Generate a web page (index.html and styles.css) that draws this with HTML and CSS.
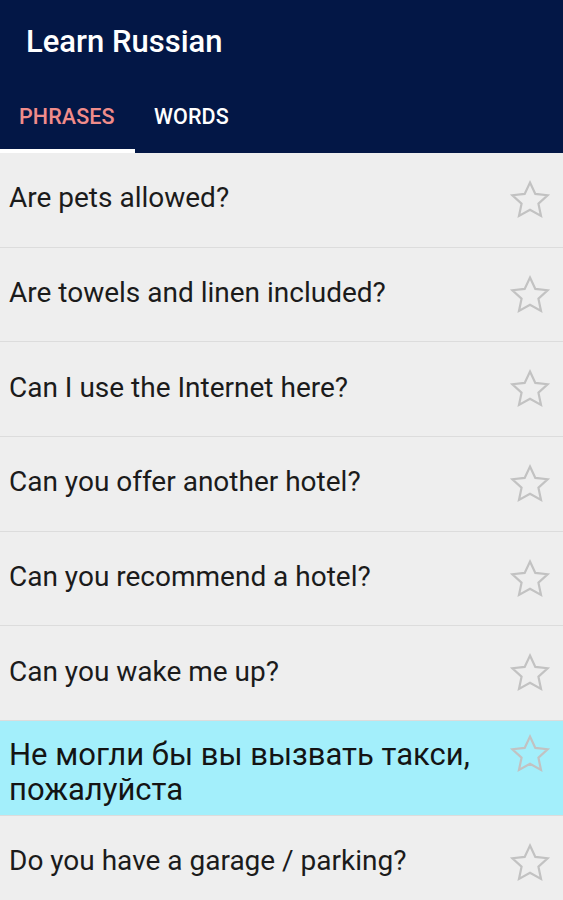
FILE: index.html
```html
<!DOCTYPE html>
<html lang="en">
<head>
    <meta charset="UTF-8">
    <meta name="viewport" content="width=device-width, initial-scale=1.0">
    <title>Learn Russian</title>
    <link rel="stylesheet" href="styles.css">
</head>
<body>
    <header class="app-bar">
        <h1 class="app-title">Learn Russian</h1>
        <nav class="tabs">
            <div class="tab active">PHRASES</div>
            <div class="tab">WORDS</div>
        </nav>
    </header>

    <ul class="phrase-list">
        <li class="phrase-row"><span class="phrase-text">Are pets allowed?</span><svg class="star" viewBox="0 0 24 24"><path d="M12 2.5l2.9 6.2 6.7.7-5 4.6 1.4 6.7L12 17.3l-6 3.4 1.4-6.7-5-4.6 6.7-.7z"/></svg></li>
        <li class="phrase-row"><span class="phrase-text">Are towels and linen included?</span><svg class="star" viewBox="0 0 24 24"><path d="M12 2.5l2.9 6.2 6.7.7-5 4.6 1.4 6.7L12 17.3l-6 3.4 1.4-6.7-5-4.6 6.7-.7z"/></svg></li>
        <li class="phrase-row"><span class="phrase-text">Can I use the Internet here?</span><svg class="star" viewBox="0 0 24 24"><path d="M12 2.5l2.9 6.2 6.7.7-5 4.6 1.4 6.7L12 17.3l-6 3.4 1.4-6.7-5-4.6 6.7-.7z"/></svg></li>
        <li class="phrase-row"><span class="phrase-text">Can you offer another hotel?</span><svg class="star" viewBox="0 0 24 24"><path d="M12 2.5l2.9 6.2 6.7.7-5 4.6 1.4 6.7L12 17.3l-6 3.4 1.4-6.7-5-4.6 6.7-.7z"/></svg></li>
        <li class="phrase-row"><span class="phrase-text">Can you recommend a hotel?</span><svg class="star" viewBox="0 0 24 24"><path d="M12 2.5l2.9 6.2 6.7.7-5 4.6 1.4 6.7L12 17.3l-6 3.4 1.4-6.7-5-4.6 6.7-.7z"/></svg></li>
        <li class="phrase-row"><span class="phrase-text">Can you wake me up?</span><svg class="star" viewBox="0 0 24 24"><path d="M12 2.5l2.9 6.2 6.7.7-5 4.6 1.4 6.7L12 17.3l-6 3.4 1.4-6.7-5-4.6 6.7-.7z"/></svg></li>
        <li class="phrase-row selected"><span class="phrase-text">Не могли бы вы вызвать такси, пожалуйста</span><svg class="star" viewBox="0 0 24 24"><path d="M12 2.5l2.9 6.2 6.7.7-5 4.6 1.4 6.7L12 17.3l-6 3.4 1.4-6.7-5-4.6 6.7-.7z"/></svg></li>
        <li class="phrase-row"><span class="phrase-text">Do you have a garage / parking?</span><svg class="star" viewBox="0 0 24 24"><path d="M12 2.5l2.9 6.2 6.7.7-5 4.6 1.4 6.7L12 17.3l-6 3.4 1.4-6.7-5-4.6 6.7-.7z"/></svg></li>
    </ul>
</body>
</html>
```

FILE: styles.css
```css
body {
    margin: 0;
    font-family: Roboto, "Noto Sans", Arial, sans-serif;
    background: #eeeeee;
    overflow: hidden;
}

/* Top app bar with tabs */
.app-bar {
    background: #031746;
    height: 153px;
    display: flex;
    flex-direction: column;
}

.app-title {
    margin: 0;
    padding: 25px 0 0 26px;
    height: 59px;
    color: #ffffff;
    font-size: 31px;
    font-weight: 500;
    line-height: 34px;
}

.tabs {
    display: flex;
    margin-top: auto;
}

.tab {
    height: 69px;
    box-sizing: border-box;
    padding: 0 19px;
    display: flex;
    align-items: center;
    color: #ffffff;
    font-size: 21.5px;
    font-weight: 500;
    letter-spacing: 0.1px;
    border-bottom: 4px solid transparent;
}

.tab.active {
    color: #f08c8a;
    width: 135px;
    border-bottom-color: #ffffff;
}

/* Phrase rows */
.phrase-list {
    list-style: none;
    margin: 0;
    padding: 0;
}

.phrase-row {
    height: 94.7px;
    box-sizing: border-box;
    border-bottom: 1px solid #dcdcdc;
    display: flex;
    align-items: center;
    padding: 0 11px 0 9px;
}

.phrase-row.selected {
    background: #a3effb;
}

.phrase-text {
    flex: 1;
    color: #1b1b1b;
    font-size: 28px;
    line-height: 35px;
    padding-bottom: 4px;
}

.selected .phrase-text {
    font-size: 31px;
    line-height: 35px;
    padding: 8px 0 0;
    color: #141414;
}

.star {
    width: 44px;
    height: 44px;
    flex-shrink: 0;
    margin-left: 20px;
    fill: none;
    stroke: #c2c2c2;
    stroke-width: 1.2;
    stroke-linejoin: miter;
}

.selected .star {
    align-self: flex-start;
    margin-top: 11px;
}
```
